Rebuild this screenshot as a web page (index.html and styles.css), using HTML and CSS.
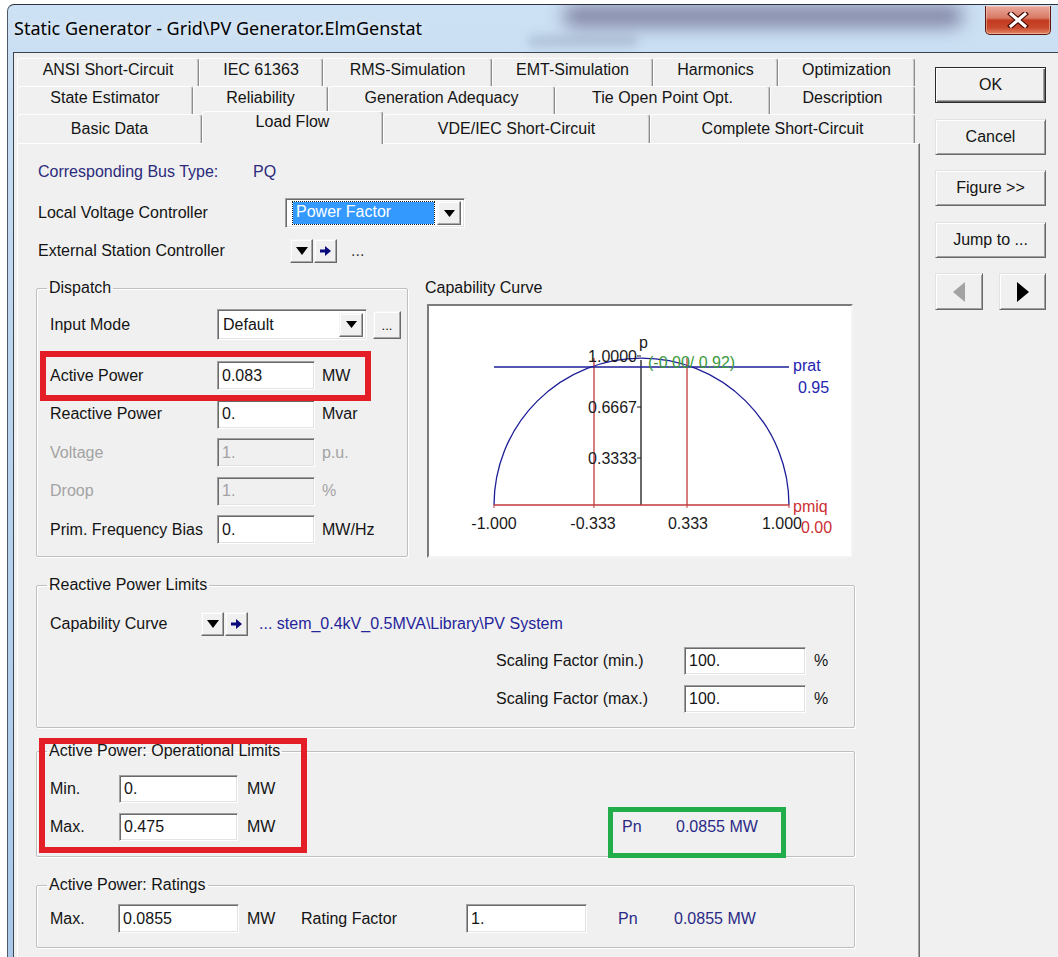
FILE: index.html
```html
<!DOCTYPE html>
<html lang="en">
<head>
<meta charset="utf-8">
<title>Static Generator - Grid\PV Generator.ElmGenstat</title>
<link rel="stylesheet" href="styles.css">
</head>
<body>
<div class="window">
  <div class="titlebar">
    <div class="smear smear-a"></div>
    <div class="smear smear-b"></div>
    <span class="title">Static Generator - Grid\PV Generator.ElmGenstat</span>
    <button class="close" type="button" aria-label="Close">
      <svg width="22" height="16" viewBox="0 0 22 16"><path d="M4 2 L18 14 M18 2 L4 14" stroke="#4a0d06" stroke-width="5.5" stroke-linecap="square"/><path d="M4 2 L18 14 M18 2 L4 14" stroke="#fff" stroke-width="3" stroke-linecap="square"/></svg>
    </button>
  </div>

  <div class="client">
    <div class="main">
      <div class="tabs">
        <div class="tab-row row1">
          <div class="tab">ANSI Short-Circuit</div>
          <div class="tab">IEC 61363</div>
          <div class="tab">RMS-Simulation</div>
          <div class="tab">EMT-Simulation</div>
          <div class="tab">Harmonics</div>
          <div class="tab">Optimization</div>
        </div>
        <div class="tab-row row2">
          <div class="tab">State Estimator</div>
          <div class="tab">Reliability</div>
          <div class="tab">Generation Adequacy</div>
          <div class="tab">Tie Open Point Opt.</div>
          <div class="tab">Description</div>
        </div>
        <div class="tab-row row3">
          <div class="tab">Basic Data</div>
          <div class="tab active">Load Flow</div>
          <div class="tab">VDE/IEC Short-Circuit</div>
          <div class="tab">Complete Short-Circuit</div>
        </div>
      </div>

      <div class="panel">
        <div class="info-row">
          <span class="bus-label">Corresponding Bus Type:</span>
          <span class="bus-value">PQ</span>
        </div>

        <div class="ctl-row voltage-ctl">
          <span class="ctl-label">Local Voltage Controller</span>
          <div class="combo combo-pf">
            <span class="combo-sel">Power Factor</span>
            <span class="drop"><svg width="11" height="7" viewBox="0 0 11 7"><path d="M0 0h11L5.5 7z" fill="#000"/></svg></span>
          </div>
        </div>

        <div class="ctl-row station-ctl">
          <span class="ctl-label wide">External Station Controller</span>
          <span class="mini"><svg width="12" height="8" viewBox="0 0 12 8"><path d="M0 0h12L6 8z" fill="#000"/></svg></span>
          <span class="mini"><svg width="11" height="10" viewBox="0 0 11 10"><path d="M0 3.5h5V0l6 5-6 5V6.5H0z" fill="#0b0b7c"/></svg></span>
          <span class="ellipsis">...</span>
        </div>

        <div class="mid">
          <fieldset class="group dispatch">
            <legend>Dispatch</legend>
            <div class="frow first">
              <span class="lbl">Input Mode</span>
              <div class="combo combo-mode">
                <span class="combo-text">Default</span>
                <span class="drop"><svg width="11" height="7" viewBox="0 0 11 7"><path d="M0 0h11L5.5 7z" fill="#000"/></svg></span>
              </div>
              <span class="mini dots">...</span>
            </div>
            <div class="frow second">
              <span class="lbl">Active Power</span>
              <span class="edit">0.083</span>
              <span class="unit">MW</span>
            </div>
            <div class="frow">
              <span class="lbl">Reactive Power</span>
              <span class="edit">0.</span>
              <span class="unit">Mvar</span>
            </div>
            <div class="frow off">
              <span class="lbl">Voltage</span>
              <span class="edit">1.</span>
              <span class="unit">p.u.</span>
            </div>
            <div class="frow off">
              <span class="lbl">Droop</span>
              <span class="edit">1.</span>
              <span class="unit">%</span>
            </div>
            <div class="frow">
              <span class="lbl">Prim. Frequency Bias</span>
              <span class="edit">0.</span>
              <span class="unit">MW/Hz</span>
            </div>
          </fieldset>

          <div class="curve-col">
            <div class="curve-title">Capability Curve</div>
            <div class="chart">
              <svg class="curve" width="422" height="250" viewBox="0 0 422 250">
                <path d="M65 199 A147.5 147 0 0 1 360 199" fill="none" stroke="#1d1d98" stroke-width="1.3"/>
                <line x1="165" y1="52" x2="165" y2="199" stroke="#c0393b" stroke-width="1.3"/>
                <line x1="258" y1="52" x2="258" y2="199" stroke="#c0393b" stroke-width="1.3"/>
                <line x1="212" y1="54" x2="212" y2="199" stroke="#1a1a1a" stroke-width="1.3"/>
                <line x1="65" y1="61" x2="360" y2="61" stroke="#1d1d98" stroke-width="1.3"/>
                <line x1="65" y1="199" x2="360" y2="199" stroke="#c0393b" stroke-width="1.3"/>
                <path d="M208 50h4M208 101h4M208 152h4" stroke="#1a1a1a" stroke-width="1"/>
                <path d="M65 199v3M165 199v3M258 199v3M360 199v3" stroke="#c0393b" stroke-width="1"/>
                <text class="k" x="210" y="42">p</text>
                <text class="k end" x="208" y="56">1.0000</text>
                <text class="k end" x="208" y="107">0.6667</text>
                <text class="k end" x="208" y="158">0.3333</text>
                <text class="g" x="219" y="62">(-0.00/ 0.92)</text>
                <text class="b" x="364" y="65">prat</text>
                <text class="b" x="369" y="87">0.95</text>
                <text class="k mid" x="65" y="223">-1.000</text>
                <text class="k mid" x="164" y="223">-0.333</text>
                <text class="k mid" x="259" y="223">0.333</text>
                <text class="k mid" x="353" y="223">1.000</text>
                <text class="r" x="364" y="206">pmiq</text>
                <text class="r" x="372" y="227">0.00</text>
              </svg>
            </div>
          </div>
        </div>

        <fieldset class="group reactive">
          <legend>Reactive Power Limits</legend>
          <div class="cap-row">
            <span class="cap-label">Capability Curve</span>
            <span class="mini"><svg width="12" height="8" viewBox="0 0 12 8"><path d="M0 0h12L6 8z" fill="#000"/></svg></span>
            <span class="mini"><svg width="11" height="10" viewBox="0 0 11 10"><path d="M0 3.5h5V0l6 5-6 5V6.5H0z" fill="#0b0b7c"/></svg></span>
            <span class="path">... stem_0.4kV_0.5MVA\Library\PV System</span>
          </div>
          <div class="scale-grid">
            <span>Scaling Factor (min.)</span><span class="edit">100.</span><span class="unit">%</span>
            <span>Scaling Factor (max.)</span><span class="edit">100.</span><span class="unit">%</span>
          </div>
        </fieldset>

        <fieldset class="group oplimits">
          <legend>Active Power: Operational Limits</legend>
          <div class="op-grid">
            <span>Min.</span><span class="edit">0.</span><span class="unit">MW</span><span></span><span></span>
            <span>Max.</span><span class="edit">0.475</span><span class="unit">MW</span><span class="info">Pn</span><span class="info">0.0855 MW</span>
          </div>
        </fieldset>

        <fieldset class="group ratings">
          <legend>Active Power: Ratings</legend>
          <div class="rate-grid">
            <span>Max.</span>
            <span class="edit">0.0855</span>
            <span class="unit">MW</span>
            <span>Rating Factor</span>
            <span class="edit">1.</span>
            <span class="info pn">Pn</span>
            <span class="info">0.0855 MW</span>
          </div>
        </fieldset>

        <div class="mark mark-active"></div>
        <div class="mark mark-limits"></div>
        <div class="mark mark-pn"></div>
      </div>
    </div>

    <div class="side">
      <button class="btn default" type="button">OK</button>
      <button class="btn" type="button">Cancel</button>
      <button class="btn" type="button">Figure &gt;&gt;</button>
      <button class="btn" type="button">Jump to ...</button>
      <div class="nav">
        <button class="btn nav-btn" type="button" aria-label="Previous"><svg width="12" height="20" viewBox="0 0 12 20"><path d="M12 0v20L0 10z" fill="#a3a3a3"/></svg></button>
        <button class="btn nav-btn" type="button" aria-label="Next"><svg width="12" height="20" viewBox="0 0 12 20"><path d="M0 0v20l12-10z" fill="#000"/></svg></button>
      </div>
    </div>
  </div>
</div>
</body>
</html>
```

FILE: styles.css
```css
* { box-sizing: border-box; }

html, body { margin: 0; padding: 0; }

body {
  width: 1058px;
  height: 957px;
  overflow: hidden;
  background: #fff;
  font-family: "Liberation Sans", Arial, sans-serif;
  font-size: 16px;
  color: #141414;
}

/* ---- window frame ---- */
.window {
  margin: 4px 0 0 7px;
  height: 953px;
  position: relative;
  display: flex;
  flex-direction: column;
  overflow: hidden;
  border-top: 1px solid #2c343e;
  border-left: 1px solid #4c5868;
  border-top-left-radius: 7px;
  background: linear-gradient(180deg, #cde1f4 0%, #bcd5ee 35%, #a9c8e9 100%);
}

.titlebar {
  position: relative;
  height: 47px;
  flex: none;
  display: flex;
  align-items: flex-start;
  padding-left: 6px;
}

.smear {
  position: absolute;
  border-radius: 14px;
  pointer-events: none;
}
.smear-a {
  left: 555px;
  top: 0;
  width: 400px;
  height: 22px;
  background: rgba(78, 70, 112, 0.6);
  filter: blur(9px);
}
.smear-b {
  left: 520px;
  top: 30px;
  width: 110px;
  height: 12px;
  background: rgba(100, 112, 140, 0.25);
  filter: blur(5px);
}

.title {
  position: relative;
  margin-top: 12px;
  font-family: "Noto Sans", "Open Sans", sans-serif;
  font-size: 18px;
  line-height: 22px;
  color: #000;
  text-shadow: 0 0 8px rgba(255, 255, 255, 0.8);
}

.close {
  position: relative;
  margin: 1px 7px 0 auto;
  width: 66px;
  height: 29px;
  padding: 0;
  display: flex;
  align-items: center;
  justify-content: center;
  border: 1px solid #5a1a10;
  border-top: none;
  border-radius: 0 0 5px 5px;
  background: linear-gradient(180deg, #e9aa9c 0%, #d87a66 42%, #c33a1f 52%, #c94a2e 78%, #e38763 100%);
  box-shadow: inset 0 0 0 1px rgba(255, 220, 210, 0.45);
}

/* ---- client area ---- */
.client {
  flex: 1;
  margin-left: 5px;
  display: flex;
  align-items: flex-start;
  padding: 5px 0 0 3px;
  background: #f0f0f0;
  border-top: 1px solid #3c444e;
  border-left: 1px solid #3c444e;
}

.main { width: 903px; flex: none; }

/* ---- tab strip ---- */
.tab-row {
  display: grid;
  width: 898px;
}
.row1 { height: 28px; grid-template-columns: 182px 124px 169px 161px 125px 137px; }
.row2 { height: 28px; grid-template-columns: 176px 135px 227px 215px 145px; }
.row3 { height: 29px; grid-template-columns: 185px 181px 267px 265px; align-items: start; }

.tab {
  height: 100%;
  border: 1px solid;
  border-color: #fdfdfd #8c8c8c transparent #fdfdfd;
  border-bottom: none;
  border-radius: 3px 3px 0 0;
  box-shadow: inset -1px 0 0 #c9c9c9;
  background: #f0f0f0;
  text-align: center;
  line-height: 22px;
  white-space: nowrap;
  overflow: hidden;
}
.row3 .tab { padding-top: 3px; }
.row3 .tab.active {
  position: relative;
  z-index: 1;
  margin-top: -3px;
  height: 33px;
  padding-top: 0;
  line-height: 20px;
}

.panel {
  position: relative;
  height: 830px;
  padding: 18px 0 0 18px;
  border: 1px solid;
  border-color: #fff #6c6c6c #6c6c6c #fff;
  box-shadow: inset -1px 0 0 #a8a8a8;
}

/* ---- top controls ---- */
.info-row {
  display: flex;
  align-items: center;
  height: 20px;
  color: #2b2b7c;
}
.bus-label { width: 217px; padding-left: 2px; }

.ctl-row {
  display: flex;
  align-items: center;
}
.voltage-ctl { margin-top: 16px; height: 30px; }
.station-ctl { margin-top: 11px; height: 24px; }
.ctl-label { width: 249px; padding-left: 2px; }
.ctl-label.wide { width: 254px; }
.ellipsis { margin-left: 14px; color: #3a3a3a; }

/* ---- sunken edit fields and combos ---- */
.edit,
.combo {
  display: flex;
  align-items: center;
  background: #fff;
  border: 1px solid;
  border-color: #a0a0a0 #fff #fff #a0a0a0;
  box-shadow: inset 1px 1px 0 #6a6a6a, inset -1px -1px 0 #e3e3e3;
  padding: 0 4px;
  white-space: nowrap;
}
.edit { height: 29px; }

.combo { position: relative; padding: 0; }
.combo-pf { width: 180px; height: 30px; }
.combo-mode { width: 150px; height: 31px; }

.combo-sel {
  margin-left: 7px;
  width: 141px;
  height: 22px;
  line-height: 20px;
  padding-left: 3px;
  background: #3399ff;
  color: #fff;
  outline: 1px dotted #1a1a1a;
}
.combo-text { margin-left: 5px; }

.drop {
  margin-left: auto;
  margin-right: 3px;
  width: 24px;
  height: 24px;
  display: flex;
  align-items: center;
  justify-content: center;
  background: #f0f0f0;
  border: 1px solid;
  border-color: #f4f4f4 #6a6a6a #6a6a6a #f4f4f4;
  box-shadow: inset -1px -1px 0 #a8a8a8, inset 1px 1px 0 #fff;
}

/* raised little buttons */
.mini {
  width: 23px;
  height: 24px;
  display: flex;
  align-items: center;
  justify-content: center;
  background: #f0f0f0;
  border: 1px solid;
  border-color: #f4f4f4 #6a6a6a #6a6a6a #f4f4f4;
  box-shadow: inset -1px -1px 0 #a8a8a8, inset 1px 1px 0 #fff;
  flex: none;
}
.mini + .mini { margin-left: 1px; }
.mini.dots {
  width: 28px;
  height: 28px;
  margin-left: 6px;
  align-items: flex-end;
  padding-bottom: 7px;
  font-size: 13px;
  line-height: 10px;
}

/* ---- group boxes ---- */
.group {
  margin: 0;
  padding: 12px 13px 12px;
  min-width: 0;
  border: 1px solid #bfbfbf;
  border-radius: 2px;
  box-shadow: inset 1px 1px 0 #fff, 1px 1px 0 #fff;
}
.group legend {
  padding: 0 2px;
  margin-left: -3px;
  line-height: 18px;
}

.mid {
  display: flex;
  align-items: flex-start;
  margin-top: 16px;
}

.dispatch { width: 372px; }

.frow {
  display: grid;
  grid-template-columns: 167px 98px auto;
  align-items: center;
  height: 29px;
  margin-top: 9.5px;
}
.frow.first { height: 31px; margin-top: 0; grid-template-columns: 167px auto auto; justify-content: start; }
.frow.second { margin-top: 21px; }
.frow .unit { padding-left: 7px; }
.frow.off { color: #a3a3a3; }
.frow.off .edit { background: #f0f0f0; }

.curve-col { margin-left: 17px; }
.curve-title { line-height: 18px; }

.chart {
  margin: 7px 0 0 2px;
  width: 426px;
  height: 254px;
  background: #fff;
  border: 2px solid;
  border-color: #7c7c7c #f4f4f4 #f4f4f4 #7c7c7c;
}
.curve { display: block; }
.curve text { font-family: "Liberation Sans", Arial, sans-serif; font-size: 16px; }
.curve .k { fill: #1a1a1a; }
.curve .end { text-anchor: end; }
.curve .mid { text-anchor: middle; }
.curve .g { fill: #3c9a3c; }
.curve .b { fill: #2424b0; }
.curve .r { fill: #cc2f33; }

.reactive {
  width: 819px;
  margin-top: 18px;
  padding: 18px 13px 14px;
}
.cap-row {
  display: flex;
  align-items: center;
  height: 24px;
}
.cap-label { width: 151px; }
.path { margin-left: 11px; color: #25259a; white-space: nowrap; }

.scale-grid {
  display: grid;
  grid-template-columns: 188px 122px auto;
  grid-auto-rows: 28px;
  row-gap: 10px;
  align-items: center;
  margin: 11px 0 0 446px;
}
.scale-grid .edit { height: 28px; }
.scale-grid .unit { padding-left: 8px; }

.oplimits {
  width: 819px;
  margin-top: 14px;
  padding: 15px 13px 15px;
}
.op-grid {
  display: grid;
  grid-template-columns: 69px 119px 384px 54px auto;
  grid-auto-rows: 28px;
  row-gap: 10px;
  align-items: center;
}
.op-grid .edit { height: 28px; }
.op-grid .unit { padding-left: 9px; }

.ratings {
  width: 819px;
  margin-top: 19px;
  padding: 10px 13px 14px;
}
.rate-grid {
  display: grid;
  grid-template-columns: 68px 121px 62px 165px 121px 87px auto;
  grid-auto-rows: 29px;
  align-items: center;
}
.rate-grid .unit { padding-left: 8px; }
.rate-grid .pn { padding-left: 31px; }

.info { color: #2a2a86; white-space: nowrap; }

/* ---- highlight frames drawn on top of the form ---- */
.mark { position: absolute; pointer-events: none; }
.mark-active { left: 22px; top: 207px; width: 331px; height: 50px; border: 6px solid #e31e27; }
.mark-limits { left: 21px; top: 594px; width: 268px; height: 115px; border: 6px solid #e31e27; }
.mark-pn { left: 590px; top: 663px; width: 178px; height: 51px; border: 5px solid #21ad4a; }

/* ---- command buttons ---- */
.side {
  width: 111px;
  margin-left: 15px;
  padding-top: 9px;
  display: flex;
  flex-direction: column;
  gap: 15.5px;
}

.btn {
  height: 36px;
  padding: 0;
  font-family: "Liberation Sans", Arial, sans-serif;
  font-size: 16px;
  color: #141414;
  background: #f0f0f0;
  border: 1px solid;
  border-color: #e3e3e3 #696969 #696969 #e3e3e3;
  box-shadow: inset 1px 1px 0 #fff, inset -1px -1px 0 #a0a0a0;
}
.btn.default {
  border-color: #2a2a2a;
  box-shadow: inset 1px 1px 0 #fff, inset -1px -1px 0 #696969, inset -2px -2px 0 #a0a0a0;
}

.nav { display: flex; justify-content: space-between; }
.nav-btn {
  width: 48px;
  height: 37px;
  display: flex;
  align-items: center;
  justify-content: center;
}
.nav-btn + .nav-btn { width: 47px; }
```
